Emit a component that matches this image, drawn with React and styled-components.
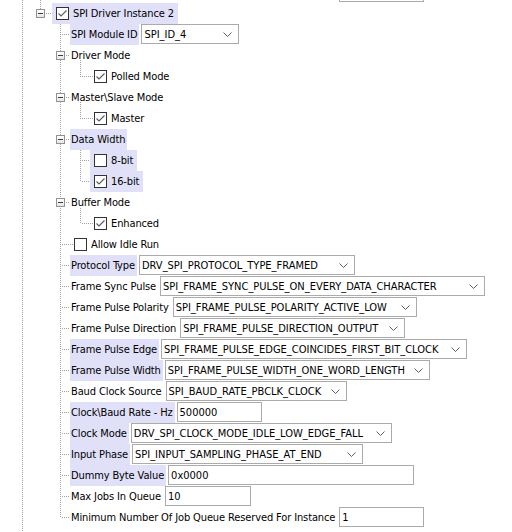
import React from "react";
import styled, { createGlobalStyle } from "styled-components";

const GlobalStyle = createGlobalStyle`
  html, body {
    margin: 0;
    padding: 0;
    background: #ffffff;
  }
  body {
    font-family: "DejaVu Sans Condensed", "DejaVu Sans", sans-serif;
    font-stretch: condensed;
    font-size: 11px;
    color: #000000;
  }
`;

const vDots = "repeating-linear-gradient(to bottom, #a0a0a0 0 1px, transparent 1px 2px)";
const hDots = "repeating-linear-gradient(to right, #a0a0a0 0 1px, transparent 1px 2px)";

const Tree = styled.div`
  position: relative;
  height: 532px;
  padding-left: 30px;
  overflow: hidden;
  background-image: ${vDots};
  background-size: 1px 100%;
  background-position: 22px 0;
  background-repeat: no-repeat;
`;

const Peek = styled.div`
  height: 3px;
  overflow: hidden;
  display: flex;
  align-items: flex-end;
  padding-left: 40px;
`;

const PeekRow = styled.div`
  display: flex;
  height: 21px;
  flex: none;
`;

const Node = styled.div`
  position: relative;

  &::before {
    content: "";
    position: absolute;
    left: 10px;
    width: 1px;
    top: ${(p) => (p.$first ? "-6px" : "0")};
    height: ${(p) =>
      p.$last ? (p.$first ? "17px" : "11px") : p.$first ? "calc(100% + 6px)" : "100%"};
    background-image: ${vDots};
    background-attachment: fixed;
  }
`;

const Children = styled.div`
  padding-left: 20px;
`;

const Row = styled.div`
  position: relative;
  display: flex;
  align-items: center;
  height: 21px;
  padding-left: 20px;

  &::before {
    content: "";
    position: absolute;
    left: ${(p) => (p.$toggle ? "15px" : "11px")};
    top: 10px;
    height: 1px;
    width: ${(p) => p.$reach}px;
    background-image: ${hDots};
    background-attachment: fixed;
  }
`;

const Toggle = styled.span`
  position: absolute;
  left: 6px;
  top: 6px;
  width: 9px;
  height: 9px;
  box-sizing: border-box;
  border: 1px solid #929292;
  background: linear-gradient(#ffffff, #e6e6e6);
  z-index: 2;

  &::after {
    content: "";
    position: absolute;
    left: 1px;
    top: 3px;
    width: 5px;
    height: 1px;
    background: #3c3c3c;
  }
`;

const Item = styled.div`
  position: relative;
  z-index: 1;
  display: flex;
  align-items: center;
  height: 21px;
  margin-left: ${(p) => p.$offset || 0}px;
  padding: ${(p) => (p.$check ? "0 4px 0 4px" : "0 2px 0 1px")};
  gap: 4px;
  background: ${(p) => (p.$selected ? "#e0e0f9" : "transparent")};
  letter-spacing: -0.12px;
  white-space: nowrap;
  visibility: ${(p) => (p.$hidden ? "hidden" : "visible")};
`;

const Box = styled.span`
  display: inline-flex;
  width: 13px;
  height: 13px;
  box-sizing: border-box;
  border: 1px solid #333333;
  background: #ffffff;
`;

const Field = styled.div`
  align-self: flex-start;
  display: flex;
  align-items: center;
  box-sizing: border-box;
  width: ${(p) => p.$width}px;
  height: 20px;
  margin-left: 2px;
  padding-left: 2px;
  border: 1px solid #ababab;
  background: #ffffff;
  white-space: nowrap;
  overflow: hidden;
`;

const Value = styled.span`
  flex: 1;
`;

const Chevron = styled.svg`
  flex: none;
  width: 9px;
  height: 5px;
  margin-right: 6px;
`;

const CheckBox = ({ checked }) => (
  <Box>
    {checked && (
      <svg width="11" height="11" viewBox="0 0 11 11">
        <polyline
          points="1.5,5.5 4,8 9.5,2.5"
          fill="none"
          stroke="#5a5a5a"
          strokeWidth="1.1"
        />
      </svg>
    )}
  </Box>
);

const Setting = ({ node, peek }) => (
  <>
    <Item $selected={node.selected} $hidden={peek}>
      {node.label}
    </Item>
    <Field $width={node.width}>
      <Value>{peek ? null : node.value}</Value>
      {node.combo && (
        <Chevron viewBox="0 0 9 5">
          <polyline points="0.5,0.5 4.5,4.5 8.5,0.5" fill="none" stroke="#5f5f5f" />
        </Chevron>
      )}
    </Field>
  </>
);

const Content = ({ node }) => {
  if (node.value !== undefined) return <Setting node={node} />;
  if (node.check !== undefined)
    return (
      <Item $check $selected={node.selected} $offset={node.offset}>
        <CheckBox checked={node.check} />
        {node.label}
      </Item>
    );
  return <Item $selected={node.selected}>{node.label}</Item>;
};

const TreeNode = ({ node, first, last }) => {
  const kids = node.children || [];
  const reach = kids.length
    ? 5 + (node.offset || 0)
    : node.check !== undefined
      ? 13
      : 9;
  return (
    <Node $first={first} $last={last}>
      <Row $toggle={kids.length > 0} $reach={reach}>
        {kids.length > 0 && <Toggle />}
        <Content node={node} />
      </Row>
      {kids.length > 0 && (
        <Children>
          {kids.map((c, i) => (
            <TreeNode key={i} node={c} first={i === 0} last={i === kids.length - 1} />
          ))}
        </Children>
      )}
    </Node>
  );
};

const group = (label, children, selected) => ({ label, children, selected });
const check = (label, on, selected) => ({ label, check: on, selected });
const combo = (label, value, width, selected) => ({ label, value, width, combo: true, selected });
const text = (label, value, width, selected) => ({ label, value, width, selected });

const lastOfPrevious = text("Minimum Number Of Job Queue Reserved For Instance", "1", 85);

const instance = {
  label: "SPI Driver Instance 2",
  check: true,
  selected: true,
  offset: 2,
  children: [
    combo("SPI Module ID", "SPI_ID_4", 98, true),
    group("Driver Mode", [check("Polled Mode", true)]),
    group("Master\\Slave Mode", [check("Master", true)]),
    group("Data Width", [check("8-bit", false, true), check("16-bit", true, true)], true),
    group("Buffer Mode", [check("Enhanced", true)]),
    check("Allow Idle Run", false),
    combo("Protocol Type", "DRV_SPI_PROTOCOL_TYPE_FRAMED", 216, true),
    combo("Frame Sync Pulse", "SPI_FRAME_SYNC_PULSE_ON_EVERY_DATA_CHARACTER", 325),
    combo("Frame Pulse Polarity", "SPI_FRAME_PULSE_POLARITY_ACTIVE_LOW", 244),
    combo("Frame Pulse Direction", "SPI_FRAME_PULSE_DIRECTION_OUTPUT", 225),
    combo("Frame Pulse Edge", "SPI_FRAME_PULSE_EDGE_COINCIDES_FIRST_BIT_CLOCK", 306, true),
    combo("Frame Pulse Width", "SPI_FRAME_PULSE_WIDTH_ONE_WORD_LENGTH", 265, true),
    combo("Baud Clock Source", "SPI_BAUD_RATE_PBCLK_CLOCK", 181),
    text("Clock\\Baud Rate - Hz", "500000", 85, true),
    combo("Clock Mode", "DRV_SPI_CLOCK_MODE_IDLE_LOW_EDGE_FALL", 261, true),
    combo("Input Phase", "SPI_INPUT_SAMPLING_PHASE_AT_END", 231, true),
    text("Dummy Byte Value", "0x0000", 246, true),
    text("Max Jobs In Queue", "10", 86),
    text("Minimum Number Of Job Queue Reserved For Instance", "1", 85),
  ],
};

export default function App() {
  return (
    <>
      <GlobalStyle />
      <Tree>
        <Peek>
          <PeekRow>
            <Setting node={lastOfPrevious} peek />
          </PeekRow>
        </Peek>
        <TreeNode node={instance} first last />
      </Tree>
    </>
  );
}
